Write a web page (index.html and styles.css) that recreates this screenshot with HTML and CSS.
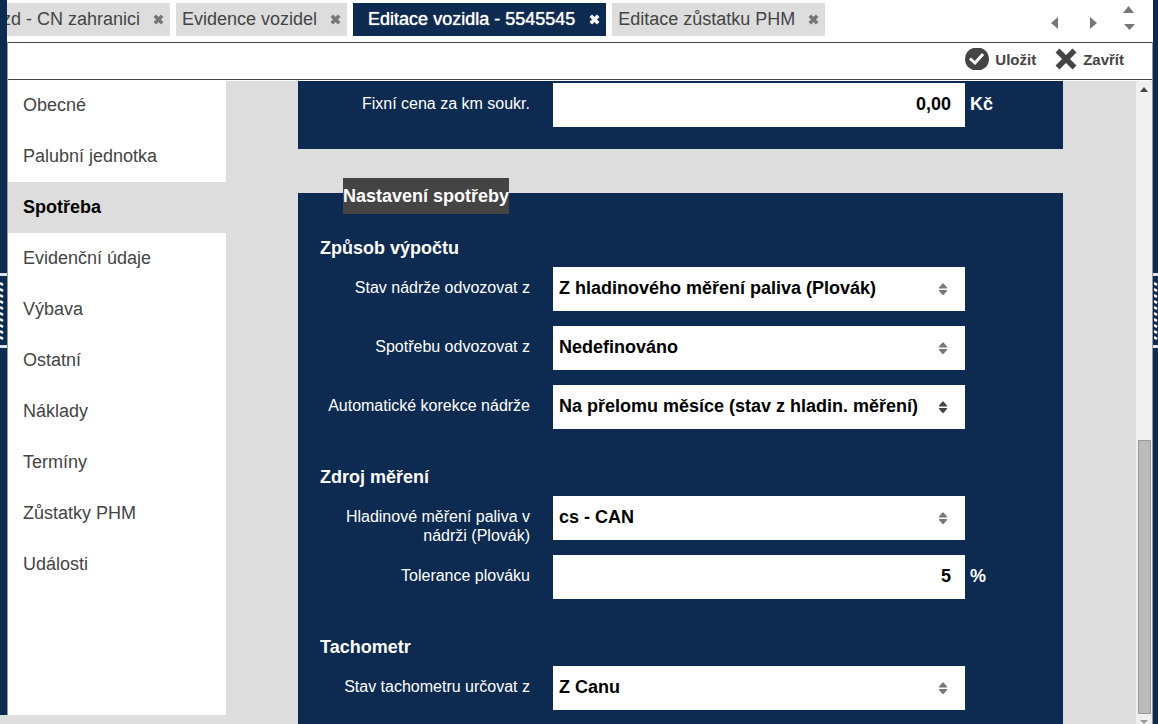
FILE: index.html
```html
<!DOCTYPE html>
<html lang="cs">
<head>
<meta charset="utf-8">
<title>Editace vozidla - 5545545</title>
<link rel="stylesheet" href="styles.css">
</head>
<body>
<svg class="defs" aria-hidden="true">
  <symbol id="close" viewBox="0 0 11 11"><path d="M1.800 1.800l7.400 7.400M9.200 1.800L1.800 9.200" fill="none" stroke="currentColor" stroke-width="3.600"/></symbol>
  <symbol id="sort" viewBox="0 0 8 12"><path d="M0 5.500V4.500L3.500.5h1L8 4.500v1zM0 7h8v1l-3.500 4h-1L0 8z"/></symbol>
  <symbol id="grip" viewBox="0 0 5 60"><path d="M0 2l3 2M0 8l3 2M0 14l3 2M0 20l3 2M0 26l3 2M0 32l3 2M0 38l3 2M0 44l3 2M0 50l3 2M0 56l3 2" stroke="#fff" stroke-width="2.600"/></symbol>
</svg>
<div class="window">
  <div class="rail rail-left"><div class="handle"><svg><use href="#grip"/></svg></div></div>
  <div class="app">
    <nav class="tabs">
      <div class="tab tab-cut"><span>zd - CN zahranici</span><button class="tab-close" aria-label="Zavřít záložku"><svg><use href="#close"/></svg></button></div>
      <div class="tab"><span>Evidence vozidel</span><button class="tab-close" aria-label="Zavřít záložku"><svg><use href="#close"/></svg></button></div>
      <div class="tab tab-active"><span>Editace vozidla - 5545545</span><button class="tab-close" aria-label="Zavřít záložku"><svg><use href="#close"/></svg></button></div>
      <div class="tab"><span>Editace zůstatku PHM</span><button class="tab-close" aria-label="Zavřít záložku"><svg><use href="#close"/></svg></button></div>
      <div class="tab-nav">
        <button aria-label="Předchozí"><svg width="7" height="12" viewBox="0 0 7 12"><path d="M7 0v12L0 6z"/></svg></button>
        <button aria-label="Další"><svg width="7" height="12" viewBox="0 0 7 12"><path d="M0 0v12l7-6z"/></svg></button>
        <button aria-label="Seznam"><svg width="12" height="25" viewBox="0 0 12 25"><path d="M0 7l5.500-7L11 7zM1 18h11l-5.500 6z"/></svg></button>
      </div>
    </nav>
    <div class="body">
      <div class="toolbar">
        <button class="tool"><svg width="24" height="22" viewBox="0 0 24 22"><path fill="#444" d="M8 0h8q8 3 8 11t-8 11H8Q0 19 0 11T8 0z"/><path fill="none" stroke="#fff" stroke-width="3" d="M5 10.500l5 4.500 8-9"/></svg><span>Uložit</span></button>
        <button class="tool"><svg width="22" height="22" viewBox="0 0 22 22"><path fill="none" stroke="#444" stroke-width="5.500" d="M2.500 2.500l17 17M19.500 2.500l-17 17"/></svg><span>Zavřít</span></button>
      </div>
      <div class="content">
        <nav class="side">
          <a href="#">Obecné</a>
          <a href="#">Palubní jednotka</a>
          <a href="#" class="current">Spotřeba</a>
          <a href="#">Evidenční údaje</a>
          <a href="#">Výbava</a>
          <a href="#">Ostatní</a>
          <a href="#">Náklady</a>
          <a href="#">Termíny</a>
          <a href="#">Zůstatky PHM</a>
          <a href="#">Události</a>
        </nav>
        <main class="form">
          <section class="panel panel-prices">
            <div class="row"><label for="price">Fixní cena za km soukr.</label><input id="price" type="text" value="0,00"><span class="unit">Kč</span></div>
          </section>
          <section class="panel panel-usage">
            <h2>Nastavení spotřeby</h2>
            <h3>Způsob výpočtu</h3>
            <div class="rows">
              <div class="row"><label for="tank">Stav nádrže odvozovat z</label><div class="pick"><select id="tank"><option>Z hladinového měření paliva (Plovák)</option></select><svg><use href="#sort"/></svg></div></div>
              <div class="row"><label for="usage">Spotřebu odvozovat z</label><div class="pick"><select id="usage"><option>Nedefinováno</option></select><svg><use href="#sort"/></svg></div></div>
              <div class="row"><label for="fix">Automatické korekce nádrže</label><div class="pick pick-dark"><select id="fix"><option>Na přelomu měsíce (stav z hladin. měření)</option></select><svg><use href="#sort"/></svg></div></div>
            </div>
            <h3>Zdroj měření</h3>
            <div class="rows">
              <div class="row"><label for="level">Hladinové měření paliva v nádrži (Plovák)</label><div class="pick"><select id="level"><option>cs - CAN</option></select><svg><use href="#sort"/></svg></div></div>
              <div class="row"><label for="tol">Tolerance plováku</label><input id="tol" type="text" value="5"><span class="unit">%</span></div>
            </div>
            <h3>Tachometr</h3>
            <div class="rows">
              <div class="row"><label for="odo">Stav tachometru určovat z</label><div class="pick"><select id="odo"><option>Z Canu</option></select><svg><use href="#sort"/></svg></div></div>
            </div>
          </section>
        </main>
        <div class="scroll">
          <svg width="8" height="5" viewBox="0 0 8 5"><path fill="#444" d="M0 5l4-5 4 5z"/></svg>
          <div class="thumb"></div>
          <svg width="8" height="4" viewBox="0 0 8 4"><path fill="#999" d="M0 0h8L4 4z"/></svg>
        </div>
      </div>
    </div>
  </div>
  <div class="rail rail-right"><div class="handle"><svg><use href="#grip"/></svg></div></div>
  <div class="status"></div>
</div>
</body>
</html>
```
FILE: styles.css
```css
* { box-sizing: border-box; }
body {
  margin: 0;
  font-family: "Liberation Sans", Arial, sans-serif;
  font-size: 18px;
  color: #444;
}
button { border: 0; padding: 0; background: none; font: inherit; color: inherit; }
svg { display: block; }
.defs { position: absolute; width: 0; height: 0; }
.window { position: relative; display: flex; height: 100vh; overflow: hidden; background: #fff; }

.rail { flex: none; background: #0d2a50; }
.rail-left { width: 7px; }
.rail-right { width: 5px; }
.handle { margin-top: 273px; height: 75px; border: solid #dde3ea; border-width: 3px 0; padding-top: 5px; }
.handle svg { width: 5px; height: 60px; }
.rail-right .handle svg { margin-left: 1px; }

.app { flex: 1; min-width: 0; display: flex; flex-direction: column; }
.tabs { display: flex; gap: 6px; height: 42px; padding-top: 3px; }
.tab {
  display: flex;
  align-items: center;
  gap: 13px;
  height: 33px;
  padding: 0 6px;
  background: #ddd;
  white-space: nowrap;
}
.tab span { padding-bottom: 1px; }
.tab-cut { width: 163px; padding-left: 0; justify-content: flex-end; overflow: hidden; }
.tab-active { gap: 14px; padding-left: 15px; background: #0d2a50; color: #fff; text-shadow: 0 0 1px #fff; }
.tab-close { color: #777; }
.tab-close svg { width: 11px; height: 11px; }
.tab-active .tab-close { color: #fff; }
.tab-nav { display: flex; align-items: center; gap: 32px; height: 39px; margin-left: auto; padding-right: 18px; }
.tab-nav svg { fill: #777; }
.tab-nav button:last-child { margin: -9px 0 0 -6px; }

.body { flex: 1; min-height: 0; display: flex; flex-direction: column; border: solid #999; border-width: 0 1px; }
.toolbar {
  display: flex;
  justify-content: flex-end;
  align-items: center;
  gap: 19px;
  height: 38px;
  padding: 0 28px 5px 0;
  border: solid #444;
  border-width: 1px 0;
}
.tool { display: flex; align-items: center; gap: 6px; font-size: 15px; font-weight: bold; }
.tool span { padding-top: 2px; }

.content { flex: 1; min-height: 0; display: flex; padding-top: 1px; }
.side { width: 218px; background: #fff; }
.side a { display: block; padding: 0 15px 1px; line-height: 50px; color: #444; text-decoration: none; }
.side a:first-child { margin-top: -1px; }
.side .current { background: #ddd; color: #000; font-weight: bold; }

.form { flex: 1; min-width: 0; overflow: hidden; padding: 0 73px 0 72px; background: #ddd; color: #fff; }
.panel { padding-left: 22px; background: #0d2a50; }
.panel-prices { padding-top: 2px; padding-bottom: 22px; margin-bottom: 44px; }
.panel-usage { padding-bottom: 60px; }
h2 {
  display: table;
  position: relative;
  top: -15px;
  margin: 0 0 0 23px;
  background: #444;
  font-size: 18px;
  line-height: 36px;
}
h3 { margin: 0; font-size: 18px; line-height: 21px; padding: 38px 0 8px; }
h2 + h3 { padding-top: 9px; }
.rows { display: grid; gap: 15px; }
.row { display: grid; grid-template: 44px / 233px 1fr 98px; }
.row label { height: 50px; padding: 11px 23px 0 0; margin-bottom: -6px; font-size: 16px; line-height: 19px; text-align: right; }
.row input, .row select {
  width: 100%;
  height: 100%;
  border: 0;
  border-radius: 0;
  margin: 0;
  background: #fff;
  color: #000;
  font: bold 18px "Liberation Sans", Arial, sans-serif;
  outline: 0;
}
.row input { padding: 0 14px 2px; text-align: right; }
.row select { appearance: none; padding: 0 40px 2px 6px; }
.pick { position: relative; }
.pick svg { position: absolute; right: 18px; top: 16px; width: 8px; height: 12px; fill: #777; pointer-events: none; }
.pick-dark svg { fill: #444; }
.unit { padding: 11px 0 0 5px; font-weight: bold; line-height: 20px; }

.scroll { flex: none; display: flex; flex-direction: column; align-items: center; width: 16px; padding-top: 6px; background: #f0f0f0; }
.thumb { width: 13px; height: 43%; margin: auto 0 6px; background: #bbb; border: 1px solid #999; }
.status { position: absolute; left: 0; bottom: 0; width: 258px; height: 9px; background: #dedede; }
```
